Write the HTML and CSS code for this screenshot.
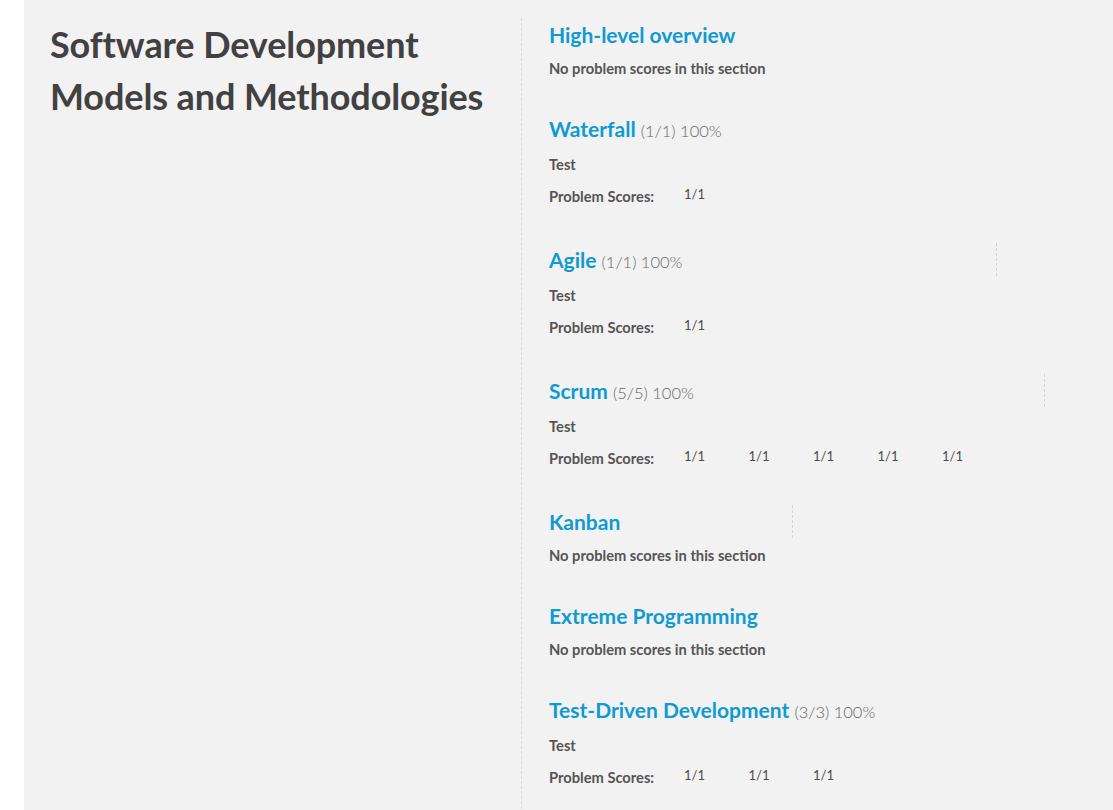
FILE: index.html
```html
<!DOCTYPE html>
<html lang="en">
<head>
<meta charset="utf-8">
<title>Progress</title>
<link rel="stylesheet" href="styles.css">
</head>
<body>
<main class="page">
  <div class="layout">
    <aside class="course-col">
      <h1 class="course-title">Software Development Models and Methodologies</h1>
    </aside>
    <section class="chapters">
      <div class="section">
        <h3 class="sec-title"><a>High-level overview</a></h3>
        <p class="empty">No problem scores in this section</p>
      </div>
      <div class="section">
        <h3 class="sec-title"><a>Waterfall</a> <span class="sec-score">(1/1) 100%</span></h3>
        <p class="label">Test</p>
        <div class="scores"><span class="label">Problem Scores:</span><ol class="score-list"><li>1/1</li></ol></div>
      </div>
      <div class="section">
        <span class="tick tick-agile"></span>
        <h3 class="sec-title"><a>Agile</a> <span class="sec-score">(1/1) 100%</span></h3>
        <p class="label">Test</p>
        <div class="scores"><span class="label">Problem Scores:</span><ol class="score-list"><li>1/1</li></ol></div>
      </div>
      <div class="section">
        <span class="tick tick-scrum"></span>
        <h3 class="sec-title"><a>Scrum</a> <span class="sec-score">(5/5) 100%</span></h3>
        <p class="label">Test</p>
        <div class="scores"><span class="label">Problem Scores:</span><ol class="score-list"><li>1/1</li><li>1/1</li><li>1/1</li><li>1/1</li><li>1/1</li></ol></div>
      </div>
      <div class="section">
        <span class="tick tick-kanban"></span>
        <h3 class="sec-title"><a>Kanban</a></h3>
        <p class="empty">No problem scores in this section</p>
      </div>
      <div class="section">
        <h3 class="sec-title"><a>Extreme Programming</a></h3>
        <p class="empty">No problem scores in this section</p>
      </div>
      <div class="section">
        <h3 class="sec-title"><a>Test-Driven Development</a> <span class="sec-score">(3/3) 100%</span></h3>
        <p class="label">Test</p>
        <div class="scores"><span class="label">Problem Scores:</span><ol class="score-list"><li>1/1</li><li>1/1</li><li>1/1</li></ol></div>
      </div>
    </section>
  </div>
</main>
</body>
</html>
```

FILE: styles.css
```css
* { box-sizing: border-box; }
html, body { margin: 0; padding: 0; }
body {
  background: #ffffff;
  font-family: "Lato", "Open Sans", sans-serif;
  color: #555555;
  height: 810px;
  overflow: hidden;
}
.page {
  margin-left: 24px;
  background: #f2f2f2;
  min-height: 810px;
  padding-top: 18px;
}
.layout {
  display: grid;
  grid-template-columns: 497px 1fr;
}
.course-col {
  padding: 0 26px 0 26px;
}
.course-title {
  margin: 0;
  font-size: 36px;
  line-height: 52px;
  font-weight: 700;
  color: #414141;
  letter-spacing: -0.1px;
}
.chapters {
  border-left: 1px dashed #d9d9d9;
  padding-left: 27px;
  min-height: 800px;
}
.section {
  position: relative;
}
.sec-title {
  margin: 0;
  font-size: 21px;
  line-height: 34px;
  font-weight: 700;
  height: 34px;
}
.sec-title a { color: #0f9ad2; }
.sec-score {
  font-size: 16.5px;
  font-weight: 300;
  color: #666666;
}
.empty, .label {
  margin: 0;
  font-size: 14.7px;
  font-weight: 700;
  color: #555555;
}
.empty {
  line-height: 33px;
  margin-bottom: 27px;
}
.section > .label {
  padding-top: 2px;
  line-height: 33px;
}
.scores {
  display: flex;
  align-items: center;
  height: 30px;
  margin-bottom: 32px;
}
.scores .label {
  width: 135px;
  flex: none;
}
.score-list {
  display: flex;
  list-style: none;
  margin: -4px 0 0 0;
  padding: 0;
}
.score-list li {
  width: 64.5px;
  font-size: 13px;
  font-weight: 400;
  color: #4a4a4a;
}
.tick {
  position: absolute;
  top: 0;
  width: 0;
  height: 33px;
  border-left: 1px dashed #d4d4d4;
}
.tick-agile { left: 447px; }
.tick-scrum { left: 495px; }
.tick-kanban { left: 243px; }
```
